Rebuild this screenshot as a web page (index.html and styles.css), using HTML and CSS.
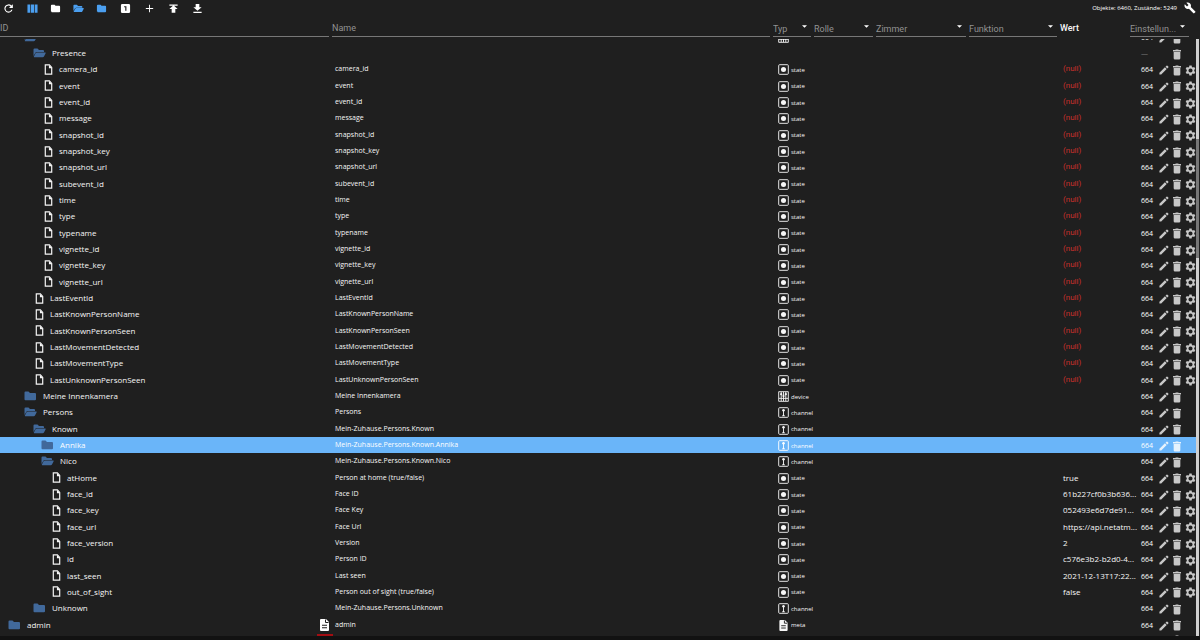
FILE: index.html
```html
<!DOCTYPE html>
<html lang="de">
<head>
<meta charset="utf-8">
<title>Objekte</title>
<meta name="viewport" content="width=device-width, initial-scale=1">
<link rel="stylesheet" href="styles.css">
</head>
<body>
<svg class="sprite" aria-hidden="true">
  <symbol id="refresh" viewBox="0 0 24 24"><path d="M18.400 5.600A9 9 0 1 0 20.700 14.500h-2.700A6.500 6.500 0 1 1 12 5.500c1.800 0 3.300.7 4.500 1.900L13 11h8.500V2.500z"/></symbol>
  <symbol id="columns" viewBox="0 0 24 24"><path d="M1 3h6v18H1zM8.500 3h7v18h-7zM17 3h6v18h-6z"/></symbol>
  <symbol id="folder" viewBox="0 0 24 24"><path d="M10 4H4a2 2 0 0 0-2 2v12c0 1.100.9 2 2 2h16a2 2 0 0 0 2-2V8a2 2 0 0 0-2-2h-8z"/></symbol>
  <symbol id="open" viewBox="0 0 26 20"><path d="M1 16V3q0-2 2-2h6l3 3h8q2 0 2 2v2.200H7.500q-2 0-3 1.800z"/><path d="M8 9h16.500q1.500 0 .8 1.500l-3.300 6.500q-.8 1.500-2.500 1.500H2.500q-1.500 0-.7-1.500l3.200-6.500Q6 9 8 9z"/></symbol>
  <symbol id="closed" viewBox="0 0 26 20"><path d="M1 16V3q0-2 2-2h6l3 3h10q2 0 2 2v10.500q0 2-2 2H3q-2 0-2-2z"/></symbol>
  <symbol id="one" viewBox="0 0 24 24"><path d="M19 2H5a3 3 0 0 0-3 3v14a3 3 0 0 0 3 3h14a3 3 0 0 0 3-3V5a3 3 0 0 0-3-3zm-5 15h-2.500V9H9V7h5z"/></symbol>
  <symbol id="plus" viewBox="0 0 24 24"><path d="M20 13h-7v7h-2v-7H4v-2h7V4h2v7h7z"/></symbol>
  <symbol id="upload" viewBox="0 0 24 24"><path d="M3 3v3h18V3zm0 10h5v8h8v-8h5l-9-8z"/></symbol>
  <symbol id="download" viewBox="0 0 24 24"><path d="M21 9h-5V2H8v7H3l9 8zM3 19v3h18v-3z"/></symbol>
  <symbol id="wrench" viewBox="0 0 24 24"><path d="M22.700 19l-9.100-9.100c.9-2.300.4-5-1.500-6.900-2-2-5-2.400-7.400-1.300L9 6 6 9 1.600 4.700C.4 7.100.9 10.100 2.900 12.100c1.900 1.900 4.600 2.400 6.900 1.500l9.100 9.100c.4.400 1 .4 1.400 0l2.300-2.300c.5-.4.500-1.100.1-1.400z"/></symbol>
  <symbol id="arrow" viewBox="0 0 10 5"><path d="M0 0h10L5 5z"/></symbol>
  <symbol id="file" viewBox="0 0 18 24"><path d="M2 2h9l5 5.500V22H2z" fill="none" stroke="currentColor" stroke-width="2.600"/><path d="M10 2v7h7z"/></symbol>
  <symbol id="doc" viewBox="0 0 18 24"><path d="M2 0h10l6 6v16a2 2 0 0 1-2 2H2a2 2 0 0 1-2-2V2a2 2 0 0 1 2-2z"/><path d="M11 1v6h6M4 12.500h10M4 17.500h10" fill="none" stroke="#1f1f1f" stroke-width="2"/></symbol>
  <symbol id="state" viewBox="0 0 24 24"><rect x="1.500" y="1.500" width="21" height="21" rx="2" fill="none" stroke="currentColor" stroke-width="2"/><circle cx="12" cy="12" r="5.500"/></symbol>
  <symbol id="channel" viewBox="0 0 24 24"><rect x="1.500" y="1.500" width="21" height="21" rx="2" fill="none" stroke="currentColor" stroke-width="2"/><circle cx="12" cy="7" r="2.800"/><path d="M11 7h2v10h-2zM8.500 20l3.500-4.500 3.500 4.500z"/></symbol>
  <symbol id="device" viewBox="0 0 24 24"><path d="M1.500 1.500h21v21h-21zM7 2v20M12 2v20M17 2v20M2 16h20" fill="none" stroke="currentColor" stroke-width="2"/><circle cx="7" cy="7" r="2.500"/><circle cx="12" cy="11" r="2.500"/><circle cx="17" cy="7" r="2.500"/></symbol>
  <symbol id="edit" viewBox="0 0 24 24"><path d="M1 18.700V23h4.300L18.500 9.800l-4.300-4.300zM22.300 6a1.600 1.600 0 0 0 0-2.300L20.300 1.700a1.600 1.600 0 0 0-2.300 0l-2.300 2.300 4.300 4.300z"/></symbol>
  <symbol id="trash" viewBox="0 0 18 24"><path d="M1.500 6.500h15v14a3 3 0 0 1-3 3h-9a3 3 0 0 1-3-3zM0 2h5l1.500-1.500h5L13 2h5v3H0z"/></symbol>
  <symbol id="gear" viewBox="0 0 24 24"><path fill-rule="evenodd" d="M9.500 1h5l.6 3.200 1.900 1.100 3.100-1.100 2.500 4.300-2.500 2.100v2.800l2.500 2.100-2.500 4.300-3.100-1.100-1.900 1.100-.6 3.200h-5l-.6-3.200L7 18.700l-3.100 1.100-2.500-4.300 2.500-2.100v-2.800L1.400 8.500l2.500-4.300L7 5.300l1.900-1.100zM12 7.500a4.500 4.500 0 1 0 0 9 4.500 4.500 0 0 0 0-9z"/></symbol>
</svg>
<div class="app">
  <header class="toolbar">
    <button class="tool" aria-label="Aktualisieren"><svg><use href="#refresh"/></svg></button>
    <div class="tool-group">
      <button class="tool blue" aria-label="Spalten"><svg><use href="#columns"/></svg></button>
      <button class="tool" aria-label="Alle zuklappen"><svg><use href="#folder"/></svg></button>
      <button class="tool blue" aria-label="Alle aufklappen"><svg><use href="#open"/></svg></button>
      <button class="tool blue" aria-label="Ordner"><svg><use href="#folder"/></svg></button>
    </div>
    <button class="tool" aria-label="Ebene 1"><svg><use href="#one"/></svg></button>
    <button class="tool" aria-label="Hinzufügen"><svg><use href="#plus"/></svg></button>
    <button class="tool" aria-label="Hochladen"><svg><use href="#upload"/></svg></button>
    <button class="tool" aria-label="Herunterladen"><svg><use href="#download"/></svg></button>
    <span class="stats">Objekte: 6460, Zustände: 5249</span>
    <button class="wrench" aria-label="Werkzeuge"><svg><use href="#wrench"/></svg></button>
  </header>
  <div class="browser">
    <table class="objects">
      <thead>
        <tr class="filters">
          <th><input class="filter" type="text" placeholder="ID" aria-label="ID"></th>
          <th><input class="filter" type="text" placeholder="Name" aria-label="Name"></th>
          <th class="pick"><select class="filter" aria-label="Typ"><option>Typ</option></select><svg class="caret"><use href="#arrow"/></svg></th>
          <th class="pick"><select class="filter" aria-label="Rolle"><option>Rolle</option></select><svg class="caret"><use href="#arrow"/></svg></th>
          <th class="pick"><select class="filter" aria-label="Zimmer"><option>Zimmer</option></select><svg class="caret"><use href="#arrow"/></svg></th>
          <th class="pick"><select class="filter" aria-label="Funktion"><option>Funktion</option></select><svg class="caret"><use href="#arrow"/></svg></th>
          <th class="value-head">Wert</th>
          <th class="pick last"><select class="filter" aria-label="Einstellungen"><option>Einstellun...</option></select><svg class="caret"><use href="#arrow"/></svg></th>
        </tr>
      </thead>
      <tbody id="rows"></tbody>
    </table>
    <div class="scrollbar"></div>
  </div>
  <footer class="bottom"></footer>
</div>
<script src="app.js"></script>
</body>
</html>
```
FILE: styles.css
```css
* { box-sizing: border-box; }
body {
  margin: 0;
  background: #1f1f1f;
  color: #f6f6f6;
  font-family: "Open Sans", "Noto Sans", sans-serif;
  font-size: 8px;
  line-height: 12px;
}
svg { display: block; flex: none; fill: currentColor; }
.sprite { position: absolute; width: 0; height: 0; }
button {
  margin: 0;
  padding: 0;
  border: 0;
  background: none;
  color: inherit;
  cursor: pointer;
}
.app { display: flex; flex-direction: column; min-height: 100vh; }

.toolbar {
  display: flex;
  align-items: center;
  gap: 13px;
  height: 16px;
  padding: 0 4px 0 3px;
  color: #fff;
}
.tool-group { display: flex; gap: 12px; }
.tool svg { width: 11px; height: 11px; }
.blue { color: #4b9ff0; }
.stats { flex: 1; text-align: right; font-size: 6px; }
.wrench { margin-left: -6px; }
.wrench svg { width: 12px; height: 12px; }

.browser { position: relative; display: flex; flex: 1; }
.objects { display: flex; flex: 1; flex-direction: column; min-width: 0; }
.objects tbody { display: flex; flex: 1; flex-direction: column; }
.objects tr {
  display: grid;
  grid-template-columns: minmax(0, 329fr) minmax(0, 438fr) 38px 59px 90px 88px 67px 66px;
  column-gap: 3px;
  margin-right: 4px;
}
.objects td, .objects th { padding: 0; min-width: 0; text-align: left; }
.filters { height: 21px; margin-bottom: 2px; }
.filter {
  width: 100%;
  height: 21px;
  padding: 4px 0 0;
  border: 0;
  border-bottom: 1px solid #777;
  border-radius: 0;
  outline: 0;
  appearance: none;
  background: none;
  color: #929292;
  font: 9px Roboto, "Liberation Sans", sans-serif;
}
.filter::placeholder { color: #929292; opacity: 1; }
.pick { display: grid; }
.pick .filter { padding-top: 5px; }
.pick > * { grid-area: 1 / 1; }
.pick.last { margin-right: 7px; }
.caret {
  width: 5px;
  height: 3px;
  margin-right: 4px;
  place-self: center end;
  color: #fff;
  pointer-events: none;
}
.objects .value-head { padding-top: 6px; font: 500 9px/12px Roboto, sans-serif; }

.row { flex: 1; min-height: 16px; align-items: center; }
.row.selected { background: #6ab5f9; color: #fff; }
.row.above,
.row.below { flex: none; min-height: 0; overflow: hidden; }
.row.above { height: 6px; grid-auto-rows: 16px; align-content: end; }
.row.below { height: 3px; align-items: start; }
.id { display: flex; align-items: center; white-space: nowrap; }
.id .label { flex: 1; }
.objects .level-0 { padding-left: 8px; }
.objects .level-2 { padding-left: 24px; }
.objects .level-3 { padding-left: 33px; }
.objects .level-4 { padding-left: 41px; }
.objects .level-5 { padding-left: 49px; }
.folder { width: 13px; height: 10px; margin-right: 6px; color: #41699b; }
.file { width: 9px; height: 11px; margin: 0 6px 0 3px; }
.objects .level-3 .file { margin-left: 2px; }
.meta-icon { width: 9px; height: 12px; color: #fff; }
.red-icon { width: 16px; height: 8px; margin: 1px -4px 0 auto; background: #a30d12; }
.name { font-size: 7px; white-space: nowrap; }
.objects .name { padding-left: 3px; }
.type { display: flex; align-items: center; gap: 2px; font-size: 6px; }
.objects .type { grid-column: 3; padding: 1px 0 0 5px; }
.type svg { width: 11px; height: 11px; }
.type .meta { width: 9px; height: 11px; margin: 0 1px; }
.objects .value {
  grid-column: 7;
  padding-left: 3px;
  white-space: nowrap;
}
.value.null { color: #c92f2b; font-family: Roboto, sans-serif; }
.actions {
  display: grid;
  grid-template-columns: 14px 10px 8px 11px;
  column-gap: 4px;
  align-items: center;
  color: #c8c8c8;
}
.objects .actions { grid-column: 8; padding: 2px 0 0 11px; }
.mode { color: #fff; font-size: 7px; }
.dash { color: #777; }
.edit { grid-column: 2; }
.trash { grid-column: 3; }
.gear { grid-column: 4; }
.actions svg { width: 10px; height: 10px; }
.actions .trash svg { width: 8px; height: 11px; }
.actions .gear svg { width: 11px; height: 11px; }
.selected .actions { color: #e6f2fc; }

.scrollbar {
  position: absolute;
  top: 23px;
  right: 1px;
  bottom: 0;
  width: 3px;
  background: linear-gradient(#d0d0d0 100px, #777 100px 219px, #d0d0d0 219px);
}
.bottom { height: 4px; background: #121212; }
```
FILE: app.js
```js
const N = null;
const NULL = "(null)";
// level, icon, id, name, type, value
const objects = [
  [3, "open", "Presence", "", "", N],
  ...["camera_id", "event", "event_id", "message", "snapshot_id", "snapshot_key", "snapshot_url",
    "subevent_id", "time", "type", "typename", "vignette_id", "vignette_key", "vignette_url"]
    .map(id => [4, "file", id, id, "state", NULL]),
  ...["LastEventId", "LastKnownPersonName", "LastKnownPersonSeen", "LastMovementDetected",
    "LastMovementType", "LastUnknownPersonSeen"]
    .map(id => [3, "file", id, id, "state", NULL]),
  [2, "closed", "Meine Innenkamera", "Meine Innenkamera", "device", N],
  [2, "open", "Persons", "Persons", "channel", N],
  [3, "open", "Known", "Mein-Zuhause.Persons.Known", "channel", N],
  [4, "closed", "Annika", "Mein-Zuhause.Persons.Known.Annika", "channel", N],
  [4, "open", "Nico", "Mein-Zuhause.Persons.Known.Nico", "channel", N],
  [5, "file", "atHome", "Person at home (true/false)", "state", "true"],
  [5, "file", "face_id", "Face ID", "state", "61b227cf0b3b636..."],
  [5, "file", "face_key", "Face Key", "state", "052493e6d7de91..."],
  [5, "file", "face_url", "Face Url", "state", "https://api.netatm..."],
  [5, "file", "face_version", "Version", "state", "2"],
  [5, "file", "id", "Person ID", "state", "c576e3b2-b2d0-4..."],
  [5, "file", "last_seen", "Last seen", "state", "2021-12-13T17:22..."],
  [5, "file", "out_of_sight", "Person out of sight (true/false)", "state", "false"],
  [3, "closed", "Unknown", "Mein-Zuhause.Persons.Unknown", "channel", N],
  [0, "closed", "admin", "admin", "meta", N]
];

const icon = (id, cls = "") => `<svg class="${cls}"><use href="#${id}"/></svg>`;
const button = (id, label) => `<button class="${id}" aria-label="${label}">${icon(id)}</button>`;

function row([level, kind, id, name, type, value]) {
  const treeIcon = icon(kind, kind === "file" ? "file" : "folder");
  const typeIcon = type === "meta" ? icon("doc", "meta") : type ? icon(type) : "";
  const mode = type ? `<span class="mode">664</span>` : `<span class="mode dash">—</span>`;
  return `<tr class="row${id === "Annika" ? " selected" : ""}">
    <td class="id level-${level}">${treeIcon}<span class="label">${id}</span>${type === "meta" ? icon("doc", "meta-icon") : ""}</td>
    <td class="name">${name}</td>
    <td class="type">${typeIcon}${type}</td>
    <td class="value${value === NULL ? " null" : ""}">${value || ""}</td>
    <td class="actions">${mode}${type ? button("edit", "Bearbeiten") : ""}${button("trash", "Löschen")}${type === "state" ? button("gear", "Einstellungen") : ""}</td>
  </tr>`;
}

const above = `<tr class="row above"><td class="id level-2">${icon("open", "folder")}</td>
  <td class="name"></td><td class="type">${icon("device")}</td><td class="value"></td>
  <td class="actions"><span class="mode">664</span>${button("edit", "Bearbeiten")}${button("trash", "Löschen")}</td></tr>`;
const below = `<tr class="row below"><td class="id"><span class="red-icon"></span></td>
  <td class="name"></td><td class="type"></td><td class="value"></td>
  <td class="actions">${button("trash", "Löschen")}</td></tr>`;

document.getElementById("rows").innerHTML = above + objects.map(row).join("") + below;
```
